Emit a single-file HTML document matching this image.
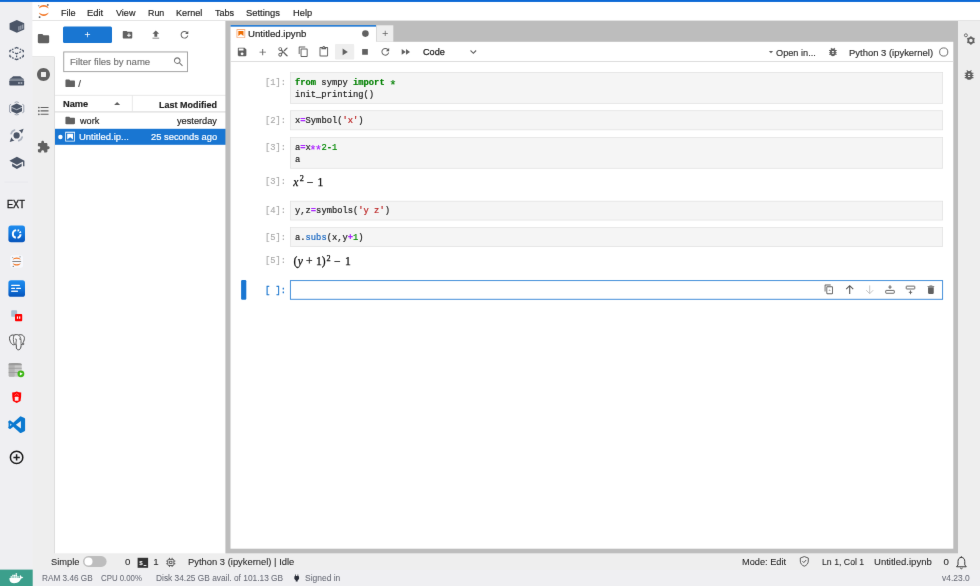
<!DOCTYPE html>
<html lang="en">
<head>
<meta charset="utf-8">
<title>JupyterLab</title>
<style>
*{box-sizing:border-box;margin:0;padding:0}
html,body{width:980px;height:586px;overflow:hidden;background:#fff}
body{font-family:"Liberation Sans",sans-serif;font-size:9.4px;color:#212121;position:relative}
#wrap{position:absolute;left:-8px;top:-8px;width:996px;height:602px;filter:url(#softblur)}
#in{position:absolute;left:8px;top:8px;width:980px;height:586px}
.t{position:absolute;white-space:nowrap;line-height:12px;height:12px;transform-origin:0 0;-webkit-text-stroke:0.18px}
.code,.pm{font-family:"Liberation Mono",monospace;font-size:9.7px;line-height:12px;white-space:pre;position:absolute;color:#212121;transform:scaleX(0.907);transform-origin:0 0}
.pm{color:#ababab;-webkit-text-stroke:0.15px #ababab}
.code{-webkit-text-stroke:0.2px}
.kw{color:#008000;font-weight:bold}.op{color:#aa22ff;font-weight:bold}.nu{color:#008800}.s{color:#ba2121}.pr{color:#1565c0}
.ast{display:inline-block;font-weight:normal;-webkit-text-stroke:0.1px;transform:translateY(3.3px) scale(1.4)}
.math{-webkit-text-stroke:0.25px #111;position:absolute;font-family:"Liberation Serif",serif;white-space:nowrap;color:#111;line-height:14px}
.math span{position:absolute;line-height:14px}
#bg{position:absolute;left:0;top:0}
</style>
</head>
<body>
<svg width="0" height="0" style="position:absolute"><defs><filter id="softblur" x="0" y="0" width="100%" height="100%" color-interpolation-filters="sRGB"><feConvolveMatrix order="3" kernelMatrix="0.00276 0.04704 0.00276 0.04704 0.80077 0.04704 0.00276 0.04704 0.00276" edgeMode="duplicate" preserveAlpha="true"/></filter></defs></svg>
<div id="wrap"><div id="in">
<svg id="bg" width="980" height="586" viewBox="0 0 980 586" style="overflow:visible">
<rect x="-8" y="-8" width="996" height="602" fill="#ffffff" />
<rect x="55" y="94.9" width="173" height="0.7" fill="#e0e0e0" />
<rect x="55" y="111.3" width="173" height="1.2" fill="#dcdcdc" />
<rect x="131.9" y="95.6" width="0.7" height="15.7" fill="#e0e0e0" />
<rect x="55" y="128.8" width="173" height="16.0" fill="#1976d2" />
<rect x="63" y="26.6" width="49" height="16.4" fill="#1976d2" rx="1.5"/>
<rect x="63.75" y="51.95" width="123.7" height="19.7" fill="#fff" stroke="#9a9a9a" stroke-width="0.9"/>
<rect x="225.4" y="15" width="744.6" height="545" fill="#bdbdbd" />
<rect x="958" y="15" width="30" height="545" fill="#eeeeee" />
<rect x="30" y="15" width="25" height="545" fill="#eeeeee" />
<rect x="54.2" y="56.6" width="0.8" height="503.4" fill="#dadada" />
<rect x="30" y="15" width="25" height="41.6" fill="#ffffff" />
<rect x="30" y="56.3" width="24.2" height="0.7" fill="#e0e0e0" />
<rect x="30" y="-8" width="958" height="29" fill="#dedede" />
<rect x="30" y="-8" width="958" height="28.2" fill="#ffffff" />
<rect x="30" y="553.3" width="958" height="21.7" fill="#eeeeee" />
<rect x="-8" y="570" width="996" height="24" fill="#efeff2" />
<rect x="-8" y="-8" width="40.4" height="578" fill="#efeff2" />
<rect x="-8" y="-8" width="996" height="9.95" fill="#0c69d6" />
<rect x="-8" y="569.6" width="40.7" height="24.4" fill="#3c9f8c" />
<rect x="83" y="556.1" width="23.6" height="10.8" rx="5.4" fill="#bdbdbd"/><circle cx="88.5" cy="561.5" r="4" fill="#fff"/>
<rect x="230.5" y="25" width="145.8" height="17" fill="#ffffff" />
<rect x="230.5" y="25" width="145.8" height="1.7" fill="#2a7fd6" />
<rect x="376.3" y="25.3" width="17.0" height="16.4" fill="#eeeeee" />
<rect x="376.3" y="25.3" width="0.7" height="16.4" fill="#d4d4d4" />
<rect x="230.5" y="41.8" width="722.8" height="506.9" fill="#ffffff" />
<rect x="230.5" y="61.1" width="722.8" height="0.8" fill="#d6d6d6" />
<rect x="335" y="44" width="19.2" height="15.6" fill="#eeeeee" rx="1"/>
<rect x="290.35" y="72.35" width="652.3" height="31.0" fill="#f5f5f5" stroke="#e0e0e0" stroke-width="0.7"/>
<rect x="290.35" y="110.75" width="652.3" height="19.1" fill="#f5f5f5" stroke="#e0e0e0" stroke-width="0.7"/>
<rect x="290.35" y="137.54999999999998" width="652.3" height="30.7" fill="#f5f5f5" stroke="#e0e0e0" stroke-width="0.7"/>
<rect x="290.35" y="201.15" width="652.3" height="18.9" fill="#f5f5f5" stroke="#e0e0e0" stroke-width="0.7"/>
<rect x="290.35" y="227.54999999999998" width="652.3" height="19.0" fill="#f5f5f5" stroke="#e0e0e0" stroke-width="0.7"/>
<rect x="290.35" y="280.65000000000003" width="652.3" height="18.6" fill="#fff" stroke="#1976d2" stroke-width="0.8"/>
<rect x="241.1" y="280.1" width="5.2" height="19.7" fill="#1976d2" rx="1.2"/>

<g transform="translate(37.5,3.5) scale(1.00000,1.00000) translate(-0.0,-0.0)"><path d="M1.3 4.9 C2.8 0.5 9.7 0.5 11.2 4.9 C8.4 2.6 4.1 2.6 1.3 4.9Z" fill="#f37726"/><path d="M1.3 9.0 C2.8 13.6 9.7 13.6 11.2 9.0 C8.4 11.4 4.1 11.4 1.3 9.0Z" fill="#f37726"/><circle cx="10.3" cy="1.4" r="0.95" fill="#616161"/><circle cx="1.2" cy="2.3" r="0.75" fill="#9e9e9e"/><circle cx="2.1" cy="13.6" r="0.95" fill="#4e4e4e"/></g>
<g transform="translate(36.7,31.8) scale(0.56667,0.56667) translate(-0.0,-0.0)"><path d="M10 4H4c-1.1 0-1.99.9-1.99 2L2 18c0 1.1.9 2 2 2h16c1.1 0 2-.9 2-2V8c0-1.1-.9-2-2-2h-8l-2-2z" fill="#616161" /></g>
<g transform="translate(36.8,67.8) scale(0.02617,0.02617) translate(-0.0,-0.0)"><path d="M256 8C119 8 8 119 8 256s111 248 248 248 248-111 248-248S393 8 256 8zm96 328c0 8.8-7.2 16-16 16H176c-8.8 0-16-7.2-16-16V176c0-8.8 7.2-16 16-16h160c8.8 0 16 7.2 16 16v160z" fill="#616161" /></g>
<g transform="translate(36.6,104.1) scale(0.56667,0.56667) translate(-0.0,-0.0)"><path d="M7,5H21V7H7V5M7,13V11H21V13H7M4,4.5A1.5,1.5 0 0,1 5.5,6A1.5,1.5 0 0,1 4,7.5A1.5,1.5 0 0,1 2.5,6A1.5,1.5 0 0,1 4,4.5M4,10.5A1.5,1.5 0 0,1 5.5,12A1.5,1.5 0 0,1 4,13.5A1.5,1.5 0 0,1 2.5,12A1.5,1.5 0 0,1 4,10.5M7,19V17H21V19H7M4,16.5A1.5,1.5 0 0,1 5.5,18A1.5,1.5 0 0,1 4,19.5A1.5,1.5 0 0,1 2.5,18A1.5,1.5 0 0,1 4,16.5Z" fill="#616161" /></g>
<g transform="translate(36.8,140.2) scale(0.55833,0.55833) translate(-0.0,-0.0)"><path d="M20.5 11H19V7c0-1.1-.9-2-2-2h-4V3.5C13 2.12 11.88 1 10.5 1S8 2.12 8 3.5V5H4c-1.1 0-1.99.9-1.99 2v3.8H3.5c1.49 0 2.7 1.21 2.7 2.7s-1.21 2.7-2.7 2.7H2V20c0 1.1.9 2 2 2h3.8v-1.5c0-1.49 1.21-2.7 2.7-2.7 1.49 0 2.7 1.21 2.7 2.7V22H17c1.1 0 2-.9 2-2v-4h1.5c1.38 0 2.5-1.12 2.5-2.5S21.88 11 20.5 11z" fill="#616161" /></g>
<g transform="translate(83,30.2) scale(0.37500,0.37500) translate(-0.0,-0.0)"><path d="M19 13h-6v6h-2v-6H5v-2h6V5h2v6h6v2z" fill="#fff" /></g>
<g transform="translate(121.8,29.0) scale(0.47500,0.47500) translate(-0.0,-0.0)"><path d="M20 6h-8l-2-2H4c-1.11 0-1.99.89-1.99 2L2 18c0 1.11.89 2 2 2h16c1.11 0 2-.89 2-2V8c0-1.11-.89-2-2-2zm-1 8h-3v3h-2v-3h-3v-2h3V9h2v3h3v2z" fill="#616161" /></g>
<g transform="translate(150.1,29.1) scale(0.47500,0.47500) translate(-0.0,-0.0)"><path d="M9 16h6v-6h4l-7-7-7 7h4zm-4 2h14v2H5z" fill="#616161" /></g>
<g transform="translate(178.7,29.0) scale(0.63889,0.63889) translate(-0.0,-0.0)"><path d="M9 13.5c-2.49 0-4.5-2.01-4.5-4.5S6.51 4.5 9 4.5c1.24 0 2.36.52 3.17 1.33L10 8h5V3l-1.76 1.76C12.15 3.68 10.66 3 9 3 5.69 3 3.01 5.69 3.01 9S5.69 15 9 15c2.97 0 5.43-2.16 5.9-5h-1.52c-.46 2-2.24 3.5-4.38 3.5z" fill="#616161" /></g>
<g transform="translate(172.8,56.2) scale(0.62222,0.62222) translate(-0.0,-0.0)"><path d="M12.1,10.9h-0.7l-0.2-0.2c0.8-0.9,1.3-2.2,1.3-3.5c0-3-2.4-5.4-5.4-5.4S1.8,4.2,1.8,7.1s2.4,5.4,5.4,5.4 c1.3,0,2.5-0.5,3.5-1.3l0.2,0.2v0.7l4.1,4.1l1.2-1.2L12.1,10.9z M7.1,10.9c-2.1,0-3.7-1.7-3.7-3.7s1.7-3.7,3.7-3.7s3.7,1.7,3.7,3.7 S9.2,10.9,7.1,10.9z" fill="#757575" /></g>
<g transform="translate(64.5,77.6) scale(0.47500,0.47500) translate(-0.0,-0.0)"><path d="M10 4H4c-1.1 0-1.99.9-1.99 2L2 18c0 1.1.9 2 2 2h16c1.1 0 2-.9 2-2V8c0-1.1-.9-2-2-2h-8l-2-2z" fill="#616161" /></g>
<path d="M114.1 105.1 L117.1 101.9 L120.1 105.1Z" fill="#616161"/>
<g transform="translate(64.5,114.8) scale(0.47500,0.47500) translate(-0.0,-0.0)"><path d="M10 4H4c-1.1 0-1.99.9-1.99 2L2 18c0 1.1.9 2 2 2h16c1.1 0 2-.9 2-2V8c0-1.1-.9-2-2-2h-8l-2-2z" fill="#616161" /></g>
<g transform="translate(64.3,130.9) scale(0.52727,0.52727) translate(-0.0,-0.0)"><path d="M18.7 3.3v15.4H3.3V3.3h15.4m1.5-1.5H1.8v18.3h18.3l.1-18.3z" fill="#fff" /><path d="M16.5 16.5l-5.4-4.3-5.6 4.3v-11h11z" fill="#fff" /></g>
<circle cx="60.4" cy="137" r="2.2" fill="#fff"/>
<g transform="translate(235.75,28.4) scale(0.46818,0.46818) translate(-0.0,-0.0)"><path d="M18.7 3.3v15.4H3.3V3.3h15.4m1.5-1.5H1.8v18.3h18.3l.1-18.3z" fill="#f2965a" /><path d="M16.5 16.5l-5.4-4.3-5.6 4.3v-11h11z" fill="#ef6c00" /></g>
<circle cx="365.4" cy="33.6" r="3.3" fill="#616161"/>
<g transform="translate(380.7,28.75) scale(0.37500,0.37500) translate(-0.0,-0.0)"><path d="M19 13h-6v6h-2v-6H5v-2h6V5h2v6h6v2z" fill="#616161" /></g>
<g transform="translate(236.4,46.2) scale(0.47500,0.47500) translate(-0.0,-0.0)"><path d="M17 3H5c-1.11 0-2 .9-2 2v14c0 1.1.89 2 2 2h14c1.1 0 2-.9 2-2V7l-4-4zm-5 16c-1.66 0-3-1.34-3-3s1.34-3 3-3 3 1.34 3 3-1.34 3-3 3zm3-10H5V5h10v4z" fill="#616161" /></g>
<g transform="translate(257.2,46.6) scale(0.45833,0.45833) translate(-0.0,-0.0)"><path d="M19 13h-6v6h-2v-6H5v-2h6V5h2v6h6v2z" fill="#616161" /></g>
<g transform="translate(277.4,46.2) scale(0.47500,0.47500) translate(-0.0,-0.0)"><path d="M9.64 7.64c.23-.5.36-1.05.36-1.64 0-2.21-1.79-4-4-4S2 3.79 2 6s1.79 4 4 4c.59 0 1.14-.13 1.64-.36L10 12l-2.36 2.36C7.14 14.13 6.59 14 6 14c-2.21 0-4 1.79-4 4s1.79 4 4 4 4-1.79 4-4c0-.59-.13-1.14-.36-1.64L12 14l7 7h3v-1L9.64 7.64zM6 8c-1.1 0-2-.89-2-2s.9-2 2-2 2 .89 2 2-.9 2-2 2zm0 12c-1.1 0-2-.89-2-2s.9-2 2-2 2 .89 2 2-.9 2-2 2zm6-7.5c-.28 0-.5-.22-.5-.5s.22-.5.5-.5.5.22.5.5-.22.5-.5.5zM19 3l-6 6 2 2 7-7V3z" fill="#616161" /></g>
<g transform="translate(297.6,45.9) scale(0.64444,0.64444) translate(-0.0,-0.0)"><path d="M11.9,1H3.2C2.4,1,1.7,1.7,1.7,2.5v10.2h1.5V2.5h8.7V1z M14.1,3.9h-8c-0.8,0-1.5,0.7-1.5,1.5v10.2c0,0.8,0.7,1.5,1.5,1.5h8 c0.8,0,1.5-0.7,1.5-1.5V5.4C15.5,4.6,14.9,3.9,14.1,3.9z M14.1,15.5h-8V5.4h8V15.5z" fill="#616161" /></g>
<g transform="translate(318.1,46.0) scale(0.47500,0.47500) translate(-0.0,-0.0)"><path d="M19 2h-4.18C14.4.84 13.3 0 12 0c-1.3 0-2.4.84-2.82 2H5c-1.1 0-2 .9-2 2v16c0 1.1.9 2 2 2h14c1.1 0 2-.9 2-2V4c0-1.1-.9-2-2-2zm-7 0c.55 0 1 .45 1 1s-.45 1-1 1-1-.45-1-1 .45-1 1-1zm7 18H5V4h2v3h10V4h2v16z" fill="#616161" /></g>
<g transform="translate(338.8,46.2) scale(0.47500,0.47500) translate(-0.0,-0.0)"><path d="M8 5v14l11-7z" fill="#616161" /></g>
<g transform="translate(359.3,46.2) scale(0.47500,0.47500) translate(-0.0,-0.0)"><path d="M6 6h12v12H6z" fill="#616161" /></g>
<g transform="translate(379.5,46.0) scale(0.64444,0.64444) translate(-0.0,-0.0)"><path d="M9 13.5c-2.49 0-4.5-2.01-4.5-4.5S6.51 4.5 9 4.5c1.24 0 2.36.52 3.17 1.33L10 8h5V3l-1.76 1.76C12.15 3.68 10.66 3 9 3 5.69 3 3.01 5.69 3.01 9S5.69 15 9 15c2.97 0 5.43-2.16 5.9-5h-1.52c-.46 2-2.24 3.5-4.38 3.5z" fill="#616161" /></g>
<g transform="translate(399.8,46.2) scale(0.47500,0.47500) translate(-0.0,-0.0)"><path d="M4 18l8.5-6L4 6v12zm9-12v12l8.5-6L13 6z" fill="#616161" /></g>
<g transform="translate(467.5,46.3) scale(0.64444,0.64444) translate(-0.0,-0.0)"><path d="M5.2,5.9L9,9.7l3.8-3.8l1.2,1.2l-4.9,5l-4.9-5L5.2,5.9z" fill="#616161" /></g>
<g transform="translate(767.5,48.7) scale(0.38889,0.38889) translate(-0.0,-0.0)"><path d="M3.5 6 L14.5 6 L9 12Z" fill="#616161"/></g>
<g transform="translate(827.2,46.2) scale(0.47500,0.47500) translate(-0.0,-0.0)"><path d="M20 8h-2.81c-.45-.78-1.07-1.45-1.82-1.96L17 4.41 15.59 3l-2.17 2.17C12.96 5.06 12.49 5 12 5c-.49 0-.96.06-1.41.17L8.41 3 7 4.41l1.62 1.63C7.88 6.55 7.26 7.22 6.81 8H4v2h2.09c-.05.33-.09.66-.09 1v1H4v2h2v1c0 .34.04.67.09 1H4v2h2.81c1.04 1.79 2.97 3 5.19 3s4.15-1.21 5.19-3H20v-2h-2.09c.05-.33.09-.66.09-1v-1h2v-2h-2v-1c0-.34-.04-.67-.09-1H20V8zm-6 8h-4v-2h4v2zm0-4h-4v-2h4v2z" fill="#616161" /></g>
<circle cx="943.7" cy="52" r="4.1" fill="none" stroke="#616161" stroke-width="0.9"/>
<g transform="translate(963,32.5) scale(1.00000,1.00000) translate(-0.0,-0.0)"><circle cx="2.9" cy="2.8" r="1.5" fill="none" stroke="#616161" stroke-width="0.9"/><g transform="translate(7.9,8)"><circle r="2.6" fill="none" stroke="#616161" stroke-width="1.7"/><rect x="-0.75" y="-4.2" width="1.5" height="1.6" fill="#616161" transform="rotate(0)"/><rect x="-0.75" y="-4.2" width="1.5" height="1.6" fill="#616161" transform="rotate(60)"/><rect x="-0.75" y="-4.2" width="1.5" height="1.6" fill="#616161" transform="rotate(120)"/><rect x="-0.75" y="-4.2" width="1.5" height="1.6" fill="#616161" transform="rotate(180)"/><rect x="-0.75" y="-4.2" width="1.5" height="1.6" fill="#616161" transform="rotate(240)"/><rect x="-0.75" y="-4.2" width="1.5" height="1.6" fill="#616161" transform="rotate(300)"/></g></g>
<g transform="translate(962.6,68.4) scale(0.54167,0.54167) translate(-0.0,-0.0)"><path d="M20 8h-2.81c-.45-.78-1.07-1.45-1.82-1.96L17 4.41 15.59 3l-2.17 2.17C12.96 5.06 12.49 5 12 5c-.49 0-.96.06-1.41.17L8.41 3 7 4.41l1.62 1.63C7.88 6.55 7.26 7.22 6.81 8H4v2h2.09c-.05.33-.09.66-.09 1v1H4v2h2v1c0 .34.04.67.09 1H4v2h2.81c1.04 1.79 2.97 3 5.19 3s4.15-1.21 5.19-3H20v-2h-2.09c.05-.33.09-.66.09-1v-1h2v-2h-2v-1c0-.34-.04-.67-.09-1H20V8zm-6 8h-4v-2h4v2zm0-4h-4v-2h4v2z" fill="#616161" /></g>
<g transform="translate(823.6,284.0) scale(0.60000,0.60000) translate(-0.0,-0.0)"><path d="M11.9,1H3.2C2.4,1,1.7,1.7,1.7,2.5v10.2h1.5V2.5h8.7V1z M14.1,3.9h-8c-0.8,0-1.5,0.7-1.5,1.5v10.2c0,0.8,0.7,1.5,1.5,1.5h8 c0.8,0,1.5-0.7,1.5-1.5V5.4C15.5,4.6,14.9,3.9,14.1,3.9z M14.1,15.5h-8V5.4h8V15.5z" fill="#616161" /><path d="M9.3 9.6h1.4v1.4h-1.4zM8.6 10h2.8v0.7H8.6z" fill="#616161"/></g>
<g transform="translate(844,284) scale(0.47500,0.47500) translate(-0.0,-0.0)"><path d="M12 3.6 L12 21 M4.6 11 L12 3.6 L19.4 11" fill="none" stroke="#555" stroke-width="2.3"/></g>
<g transform="translate(864,284) scale(0.47500,0.47500) translate(-0.0,-0.0)"><path d="M12 3 L12 20.4 M4.6 13 L12 20.4 L19.4 13" fill="none" stroke="#c2c2c2" stroke-width="2"/></g>
<g transform="translate(884.3,284) scale(0.47500,0.47500) translate(-0.0,-0.0)"><path d="M12 2.5 v8 M8.5 6.5 h7" fill="none" stroke="#616161" stroke-width="2"/><rect x="3" y="13.5" width="18" height="6" rx="1" fill="none" stroke="#616161" stroke-width="2"/></g>
<g transform="translate(904.8,284) scale(0.47500,0.47500) translate(-0.0,-0.0)"><path d="M12 13.5 v8 M8.5 17.5 h7" fill="none" stroke="#616161" stroke-width="2"/><rect x="3" y="4.5" width="18" height="6" rx="1" fill="none" stroke="#616161" stroke-width="2"/></g>
<g transform="translate(925.2,284) scale(0.47500,0.47500) translate(-0.0,-0.0)"><path d="M6 19c0 1.1.9 2 2 2h8c1.1 0 2-.9 2-2V7H6v12zM19 4h-3.5l-1-1h-5l-1 1H5v2h14V4z" fill="#616161" /></g>
<g transform="translate(137.6,557.8) scale(1.00000,1.00000) translate(-0.0,-0.0)"><rect width="10.5" height="10" fill="#333"/><text x="1.6" y="7.6" font-family="Liberation Sans, sans-serif" font-size="6.2" font-weight="bold" fill="#fff">$</text><rect x="6" y="7.2" width="2.8" height="0.9" fill="#fff"/></g>
<g transform="translate(165.6,557.2) scale(0.43333,0.43333) translate(-0.0,-0.0)"><rect x="5" y="5" width="14" height="14" rx="2" fill="none" stroke="#424242" stroke-width="2"/><rect x="9.3" y="9.3" width="5.4" height="5.4" fill="none" stroke="#424242" stroke-width="1.8"/><path d="M9 1.5v3M15 1.5v3M9 19.5v3M15 19.5v3M1.5 9h3M1.5 15h3M19.5 9h3M19.5 15h3" stroke="#424242" stroke-width="2" fill="none"/></g>
<g transform="translate(798.3,555.3) scale(0.50000,0.50000) translate(-0.0,-0.0)"><path d="M12 2.5 L20 5.5 V11.5 C20 16.3 16.7 20.3 12 21.8 C7.300 20.3 4 16.3 4 11.500 V5.5 Z" fill="none" stroke="#424242" stroke-width="1.7"/><path d="M8.3 11.8 L11 14.5 L15.8 9.4" fill="none" stroke="#424242" stroke-width="1.8"/></g>
<g transform="translate(953.9,554.9) scale(0.62500,0.62500) translate(-0.0,-0.0)"><path d="M12 4 C8.300 4 6.600 7 6.600 10.500 V16 L4.200 19 H19.800 L17.400 16 V10.500 C17.400 7 15.700 4 12 4Z" fill="none" stroke="#3a3a3a" stroke-width="1.600" stroke-linejoin="round"/><path d="M10.100 21 Q12 23.400 13.900 21" fill="none" stroke="#3a3a3a" stroke-width="1.600"/><circle cx="12" cy="3.300" r="1.100" fill="#333"/></g>
<g transform="translate(9.4,571.3) scale(0.57500,0.57500) translate(-0.0,-0.0)"><path d="M13.983 11.078h2.119a.186.186 0 00.186-.185V9.006a.186.186 0 00-.186-.186h-2.119a.185.185 0 00-.185.185v1.888c0 .102.083.185.185.185m-2.954-5.43h2.118a.186.186 0 00.186-.186V3.574a.186.186 0 00-.186-.185h-2.118a.185.185 0 00-.185.185v1.888c0 .102.082.185.185.185m0 2.716h2.118a.187.187 0 00.186-.186V6.29a.186.186 0 00-.186-.185h-2.118a.185.185 0 00-.185.185v1.887c0 .102.082.185.185.186m-2.93 0h2.12a.186.186 0 00.184-.186V6.29a.185.185 0 00-.185-.185H8.1a.185.185 0 00-.185.185v1.887c0 .102.083.185.185.186m-2.964 0h2.119a.186.186 0 00.185-.186V6.29a.185.185 0 00-.185-.185H5.136a.186.186 0 00-.186.185v1.887c0 .102.084.185.186.186m5.893 2.715h2.118a.186.186 0 00.186-.185V9.006a.186.186 0 00-.186-.186h-2.118a.185.185 0 00-.185.185v1.888c0 .102.082.185.185.185m-2.93 0h2.12a.185.185 0 00.184-.185V9.006a.185.185 0 00-.184-.186h-2.12a.185.185 0 00-.184.185v1.888c0 .102.083.185.185.185m-2.964 0h2.119a.185.185 0 00.185-.185V9.006a.185.185 0 00-.184-.186h-2.12a.186.186 0 00-.186.186v1.887c0 .102.084.185.186.185m-2.92 0h2.12a.185.185 0 00.184-.185V9.006a.185.185 0 00-.184-.186h-2.12a.185.185 0 00-.184.185v1.888c0 .102.082.185.185.185M23.763 9.89c-.065-.051-.672-.51-1.954-.51-.338.001-.676.03-1.01.087-.248-1.7-1.653-2.53-1.716-2.566l-.344-.199-.226.327c-.284.438-.49.922-.612 1.43-.23.97-.09 1.882.403 2.661-.595.332-1.55.413-1.744.42H.751a.751.751 0 00-.75.748 11.376 11.376 0 00.692 4.062c.545 1.428 1.355 2.48 2.41 3.124 1.18.723 3.1 1.137 5.275 1.137.983.003 1.963-.086 2.93-.266a12.248 12.248 0 003.823-1.389c.98-.567 1.86-1.288 2.61-2.136 1.252-1.418 1.998-2.997 2.553-4.4h.221c1.372 0 2.215-.549 2.68-1.009.309-.293.55-.65.707-1.046l.098-.288Z" fill="#fff" /></g>
<g transform="translate(292,573.2) scale(0.39167,0.39167) translate(-0.0,-0.0)"><path d="M16 7V3h-2v4h-4V3H8v4C7 7 6 8 6 9v5.5L9.5 18v3h5v-3l3.500-3.500V9c0-1-1-2-2-2z" fill="#2b2f3a"/></g>
<g transform="translate(9,19.6) scale(1.00000,1.00000) translate(-0.0,-0.0)"><path d="M7.8 0.4 L15.2 3.7 V9.8 L7.8 13.1 L0.6 9.800 V3.7 Z" fill="#4b5567"/><path d="M9.4 6.9 l1.100-0.500 v4.3 l-1.100 0.500z M11.3 6.050 l1.100-0.500 v4.3 l-1.100 0.500z M13.2 5.200 l1.100-0.500 v4.3 l-1.100 0.500z" fill="#a9b0bd"/></g>
<g transform="translate(9,46.9) scale(1.00000,1.00000) translate(-0.0,-0.0)"><path d="M5.700 1.500 L7.600 0.600 L9.500 1.500 M3.000 2.750 L4.400 2.100 M12.200 2.750 L10.800 2.100 M2.300 3.100 L0.900 3.750 V5.400 M12.900 3.100 L14.300 3.750 V5.400 M0.900 7.800 V9.600 L2.300 10.300 M14.300 7.800 V9.600 L12.900 10.300 M3.200 10.700 L4.600 11.400 M12.000 10.700 L10.600 11.400 M5.700 11.900 L7.600 12.800 L9.500 11.900" fill="none" stroke="#4b5567" stroke-width="1.300" stroke-linejoin="round"/><path d="M3.200 4.800 L5.000 5.600 M12.000 4.800 L10.200 5.600 M6.000 6.100 L7.600 6.900 L9.200 6.100 M7.600 6.900 V7.400 M7.600 8.700 V10.300" fill="none" stroke="#4b5567" stroke-width="1.200"/></g>
<g transform="translate(9,76) scale(1.00000,1.00000) translate(-0.0,-0.0)"><path d="M4.2 0.300 H11.2 L15 3.4 H0.4 Z" fill="#4b5567"/><path d="M1.2 2.6 H14.2 L15.100 4.4 H0.300Z" fill="#7d8593"/><rect x="0.300" y="4.400" width="14.8" height="5.2" rx="0.8" fill="#4b5567"/><rect x="9.100" y="6.100" width="1.700" height="1.800" fill="#a9b0bd"/><rect x="11.600" y="6.100" width="1.700" height="1.800" fill="#a9b0bd"/></g>
<g transform="translate(9,101.4) scale(1.00000,1.00000) translate(-0.0,-0.0)"><path d="M7.700 2.100 L13.000 4.500 V9.900 L7.700 12.400 L2.400 9.900 V4.500Z" fill="#4b5567"/><path d="M2.400 5.900 L7.700 8.300 L13.000 5.900" fill="none" stroke="#c5cad2" stroke-width="0.900"/><path d="M2.100 2.900 L0.600 3.700 V10.600 L2.100 11.400 M13.300 2.900 L14.800 3.700 V10.600 L13.300 11.400 M5.600 1.200 L7.700 0.400 L9.800 1.200 M5.600 13.000 L7.700 13.500 L9.800 13.000" fill="none" stroke="#9aa1af" stroke-width="1.000"/></g>
<g transform="translate(9.3,128) scale(1.00000,1.00000) translate(-0.0,-0.0)"><circle cx="7.3" cy="7.400" r="3.100" fill="#4b5567"/><path d="M9.400 2.400 L14.300 0.700 L12.600 5.600 C12.000 4.100 10.900 3.000 9.400 2.400Z" fill="#4b5567"/><path d="M5.300 12.400 L0.400 14.100 L2.100 9.200 C2.700 10.700 3.800 11.800 5.300 12.400Z" fill="#4b5567"/><path d="M1.900 5.600 C2.300 3.900 3.500 2.600 5.200 2.100" fill="none" stroke="#a9b0bd" stroke-width="1.800" stroke-linecap="round"/><path d="M12.800 9.200 C12.400 10.900 11.200 12.200 9.500 12.700" fill="none" stroke="#a9b0bd" stroke-width="1.800" stroke-linecap="round"/></g>
<g transform="translate(8.7,154.6) scale(0.68333,0.68333) translate(-0.0,-0.0)"><path d="M5 13.18v4L12 21l7-3.82v-4L12 17l-7-3.82zM12 3L1 9l11 6 9-4.91V17h2V9L12 3z" fill="#4b5567" /></g>
<rect x="4.5" y="181.7" width="23.5" height="0.7" fill="#e5e5ea"/>
<g transform="translate(8.4,225.6)"><defs><linearGradient id="g1" x1="0" y1="0" x2="0" y2="1"><stop offset="0" stop-color="#1f8cee"/><stop offset="0.45" stop-color="#1279e0"/><stop offset="1" stop-color="#0653ba"/></linearGradient></defs><rect width="16.6" height="16.6" rx="2.6" fill="url(#g1)"/><path d="M7.42 12.20 A3.9 3.9 0 0 1 7.76 4.54 M9.18 4.60 A3.9 3.9 0 0 1 10.59 5.24 M11.37 6.00 A3.9 3.9 0 0 1 12.08 7.46 M12.19 8.60 A3.9 3.9 0 0 1 9.11 12.21" fill="none" stroke="#fff" stroke-width="1.9"/></g>
<g transform="translate(10.4,255.2) scale(0.92647,0.92647) translate(-0.0,-0.0)"><rect width="13.6" height="13.6" rx="2.400" fill="#f6f8fd"/><path d="M2.500 5.000 C3.800 1.500 9.800 1.500 11.100 5.000 C8.800 3.500 4.800 3.500 2.500 5.000Z" fill="#f37726"/><path d="M2.500 8.600 C3.800 12.100 9.800 12.100 11.100 8.600 C8.800 10.100 4.800 10.100 2.500 8.600Z" fill="#f37726"/><rect x="1.900" y="6.250" width="9.800" height="1.100" rx="0.500" fill="#6e6e6e" opacity="0.850"/><circle cx="10.400" cy="1.800" r="0.700" fill="#777"/><circle cx="2.500" cy="2.500" r="0.550" fill="#888"/><circle cx="3.100" cy="12.100" r="0.700" fill="#777"/></g>
<g transform="translate(8.4,280.2)"><defs><linearGradient id="g2" x1="0" y1="0" x2="0" y2="1"><stop offset="0" stop-color="#1f8cee"/><stop offset="0.45" stop-color="#1279e0"/><stop offset="1" stop-color="#0653ba"/></linearGradient></defs><rect width="16.6" height="16.6" rx="2.600" fill="url(#g2)"/><rect x="2.700" y="4.500" width="8.800" height="1.300" rx="0.500" fill="#fff"/><rect x="2.700" y="7.500" width="4.000" height="1.300" rx="0.500" fill="#fff"/><rect x="7.700" y="7.500" width="4.900" height="1.300" rx="0.500" fill="#fff"/><rect x="2.700" y="10.200" width="6.900" height="1.500" rx="0.500" fill="#e4eefc"/></g>
<g transform="translate(11,310) scale(1.00000,1.00000) translate(-0.0,-0.0)"><rect x="0.200" y="0.200" width="5.900" height="6.600" rx="0.900" fill="#a9bfd0"/><rect x="4.000" y="4.000" width="7.200" height="7.200" rx="0.900" fill="#ff0000"/><rect x="5.900" y="6.400" width="1.200" height="2.400" fill="#fff"/><rect x="8.100" y="6.400" width="1.200" height="2.400" fill="#fff"/></g>
<g transform="translate(8.8,334) scale(1.00000,1.00000) translate(-0.0,-0.0)"><path d="M5.600 10.600 C3.300 11.400 1.300 8.600 0.700 4.700 C0.300 1.900 2.700 0.400 5.200 1.200 C6.300 0.500 8.600 0.400 9.900 1.000 C12.800 0.000 15.800 1.700 15.600 4.500 C15.500 6.300 14.600 8.300 13.700 9.500 C14.400 9.700 15.100 9.600 15.300 9.900 C14.600 10.800 12.900 10.800 12.300 10.200 C12.300 12.000 12.300 14.200 11.000 15.300 C9.400 16.500 7.800 15.500 7.600 13.900 C7.500 12.600 7.600 11.400 7.400 10.500 C6.800 10.100 6.200 10.200 5.600 10.600Z" fill="#f5f5f7" stroke="#4a4a4a" stroke-width="1.000"/><path d="M5.200 1.300 C4.300 3.600 4.300 7.000 5.500 10.300 M9.900 1.100 C11.600 2.600 12.700 5.400 12.200 9.800 M6.300 5.400 C6.900 4.700 7.800 5.000 7.600 6.200 C7.500 7.600 6.800 8.800 7.500 10.300 M10.300 4.900 C11.200 4.500 11.800 5.300 11.300 6.000" fill="none" stroke="#555" stroke-width="0.900"/></g>
<g transform="translate(8,362.4) scale(1.00000,1.00000) translate(-0.0,-0.0)"><rect x="0.700" y="0.700" width="13.000" height="13.700" rx="1.600" fill="#c9c9c9"/><rect x="0.700" y="0.700" width="6.000" height="13.700" rx="1.000" fill="#b3b3b3"/><path d="M0.700 1.700 C3.000 0.300 11.400 0.300 13.700 1.700 V2.800 H0.700Z" fill="#9a9a9a"/><rect x="0.700" y="5.400" width="13.000" height="0.900" fill="#9d9d9d"/><rect x="0.700" y="9.600" width="13.000" height="0.900" fill="#9d9d9d"/><circle cx="12.900" cy="11.400" r="3.400" fill="#3fb618"/><path d="M11.900 9.800 L14.800 11.400 L11.900 13.000Z" fill="#fff"/></g>
<g transform="translate(11.8,391.4) scale(1.00000,1.00000) translate(-0.0,-0.0)"><path d="M4.900 0.200 C6.300 0.900 7.900 1.200 9.400 1.200 C9.500 4.000 9.300 7.000 8.700 9.700 L4.900 11.700 L1.100 9.700 C0.500 7.000 0.300 4.000 0.400 1.200 C1.900 1.200 3.500 0.900 4.900 0.200Z" fill="#ff0000"/><rect x="3.000" y="5.300" width="3.700" height="4.000" rx="0.500" fill="#fff" opacity="0.920"/><path d="M2.700 4.000 L4.900 2.200 L7.100 4.000" stroke="#ff8080" stroke-width="0.800" fill="none"/></g>
<g transform="translate(8.3,416.3) scale(0.70000,0.70000) translate(-0.0,-0.0)"><path d="M23.15 2.587L18.21.21a1.494 1.494 0 0 0-1.705.29l-9.46 8.63-4.12-3.128a.999.999 0 0 0-1.276.057L.327 7.261A1 1 0 0 0 .326 8.74L3.899 12 .326 15.26a1 1 0 0 0 .001 1.479L1.65 17.94a.999.999 0 0 0 1.276.057l4.12-3.128 9.46 8.63a1.492 1.492 0 0 0 1.704.29l4.942-2.377A1.5 1.5 0 0 0 24 20.06V3.939a1.5 1.5 0 0 0-.85-1.352zm-5.146 14.861L10.826 12l7.178-5.448v10.896z" fill="#0b79d0" /><path d="M1.2 7.6 L6.8 12 L1.2 16.4Z" fill="#0b79d0" stroke="#0b79d0" stroke-width="1.6" stroke-linejoin="round"/><path d="M2.7 10.3 L4.9 12 L2.7 13.7Z" fill="#dfe9f5"/></g>
<g transform="translate(9,450) scale(1.00000,1.00000) translate(-0.0,-0.0)"><circle cx="7.600" cy="7.400" r="6.200" fill="none" stroke="#1a1a1a" stroke-width="1.500"/><path d="M7.600 4.200 V10.600 M4.400 7.400 H10.800" stroke="#1a1a1a" stroke-width="1.500" fill="none"/></g>

</svg>
<div class="t" style="left:60.70px;top:7px;font-size:9.7px;color:#1f1f1f;transform:scaleX(0.9404)">File</div>
<div class="t" style="left:87.48px;top:7px;font-size:9.7px;color:#1f1f1f;transform:scaleX(0.9711)">Edit</div>
<div class="t" style="left:116.26px;top:7px;font-size:9.7px;color:#1f1f1f;transform:scaleX(0.9318)">View</div>
<div class="t" style="left:147.55px;top:7px;font-size:9.7px;color:#1f1f1f;transform:scaleX(0.9120)">Run</div>
<div class="t" style="left:176.03px;top:7px;font-size:9.7px;color:#1f1f1f;transform:scaleX(0.9395)">Kernel</div>
<div class="t" style="left:214.77px;top:7px;font-size:9.7px;color:#1f1f1f;transform:scaleX(0.9351)">Tabs</div>
<div class="t" style="left:245.82px;top:7px;font-size:9.7px;color:#1f1f1f;transform:scaleX(0.9696)">Settings</div>
<div class="t" style="left:292.52px;top:7px;font-size:9.7px;color:#1f1f1f;transform:scaleX(0.9594)">Help</div>
<div class="t" style="left:70.02px;top:56px;font-size:9.7px;color:#757575;transform:scaleX(0.9864)">Filter files by name</div>
<div class="t" style="left:78.27px;top:78px;font-size:9.7px;color:#424242;transform:scaleX(1.0000)">/</div>
<div class="t" style="left:62.79px;top:98px;font-size:9.7px;color:#1f1f1f;transform:scaleX(0.9578);font-weight:bold">Name</div>
<div class="t" style="left:158.98px;top:99px;font-size:9.7px;color:#1f1f1f;transform:scaleX(0.9270);font-weight:bold">Last Modified</div>
<div class="t" style="left:79.68px;top:115px;font-size:9.7px;color:#1f1f1f;transform:scaleX(0.9406)">work</div>
<div class="t" style="left:176.62px;top:115px;font-size:9.7px;color:#1f1f1f;transform:scaleX(0.9515)">yesterday</div>
<div class="t" style="left:79.37px;top:131px;font-size:9.7px;color:#ffffff;transform:scaleX(0.9753)">Untitled.ip...</div>
<div class="t" style="left:151.07px;top:131px;font-size:9.7px;color:#ffffff;transform:scaleX(0.9661)">25 seconds ago</div>
<div class="t" style="left:247.93px;top:28px;font-size:9.7px;color:#1f1f1f;transform:scaleX(0.9945)">Untitled.ipynb</div>
<div class="t" style="left:423.27px;top:46px;font-size:9.7px;color:#1f1f1f;transform:scaleX(0.9419);-webkit-text-stroke:0.25px #1f1f1f">Code</div>
<div class="t" style="left:776.32px;top:47px;font-size:9.7px;color:#333;transform:scaleX(0.9475)">Open in...</div>
<div class="t" style="left:849.23px;top:47px;font-size:9.7px;color:#333;transform:scaleX(0.9753)">Python 3 (ipykernel)</div>
<div class="t" style="left:51.37px;top:556px;font-size:9.7px;color:#262626;transform:scaleX(0.9604);-webkit-text-stroke:0.07px #262626">Simple</div>
<div class="t" style="left:124.90px;top:556px;font-size:9.7px;color:#262626;transform:scaleX(1.0000);-webkit-text-stroke:0.07px #262626">0</div>
<div class="t" style="left:153.17px;top:556px;font-size:9.7px;color:#262626;transform:scaleX(1.0000);-webkit-text-stroke:0.07px #262626">1</div>
<div class="t" style="left:188.23px;top:556px;font-size:9.7px;color:#262626;transform:scaleX(0.9692);-webkit-text-stroke:0.07px #262626">Python 3 (ipykernel) | Idle</div>
<div class="t" style="left:742.13px;top:556px;font-size:9.7px;color:#262626;transform:scaleX(0.9517);-webkit-text-stroke:0.07px #262626">Mode: Edit</div>
<div class="t" style="left:822.07px;top:556px;font-size:9.7px;color:#262626;transform:scaleX(0.9006);-webkit-text-stroke:0.07px #262626">Ln 1, Col 1</div>
<div class="t" style="left:874.21px;top:556px;font-size:9.7px;color:#262626;transform:scaleX(0.9838);-webkit-text-stroke:0.07px #262626">Untitled.ipynb</div>
<div class="t" style="left:943.41px;top:556px;font-size:9.7px;color:#262626;transform:scaleX(1.0000);-webkit-text-stroke:0.07px #262626">0</div>
<div class="t" style="left:42.49px;top:572px;font-size:8.9px;color:#676a75;transform:scaleX(0.9254);-webkit-text-stroke:0.04px #676a75">RAM 3.46 GB</div>
<div class="t" style="left:101.49px;top:572px;font-size:8.9px;color:#676a75;transform:scaleX(0.8832);-webkit-text-stroke:0.04px #676a75">CPU 0.00%</div>
<div class="t" style="left:155.64px;top:572px;font-size:8.9px;color:#676a75;transform:scaleX(0.9408);-webkit-text-stroke:0.04px #676a75">Disk 34.25 GB avail. of 101.13 GB</div>
<div class="t" style="left:304.72px;top:572px;font-size:8.9px;color:#676a75;transform:scaleX(0.9540);-webkit-text-stroke:0.04px #676a75">Signed in</div>
<div class="t" style="left:941.93px;top:572px;font-size:8.9px;color:#676a75;transform:scaleX(0.9523);-webkit-text-stroke:0.04px #676a75">v4.23.0</div>
<div class="t" style="left:6.73px;top:199px;font-size:10px;color:#1c1c1e;transform:scaleX(0.9121);-webkit-text-stroke:0.4px #1c1c1e">EXT</div>

<div class="pm" style="left:265.2px;top:77px">[1]:</div>
<div class="code" style="left:294.9px;top:77px"><span class="kw">from</span> sympy <span class="kw">import</span> <span class="kw ast">*</span>
init_printing()</div>
<div class="pm" style="left:265.2px;top:115px">[2]:</div>
<div class="code" style="left:294.9px;top:115px">x<span class="op">=</span>Symbol(<span class="s">'x'</span>)</div>
<div class="pm" style="left:265.2px;top:142px">[3]:</div>
<div class="code" style="left:294.9px;top:142px">a<span class="op">=</span>x<span class="op ast">*</span><span class="op ast">*</span><span class="nu">2</span><span class="kw">-</span><span class="nu">1</span>
a</div>
<div class="pm" style="left:265.2px;top:176px">[3]:</div>
<div class="pm" style="left:265.2px;top:205px">[4]:</div>
<div class="code" style="left:294.9px;top:205px">y,z<span class="op">=</span>symbols(<span class="s">'y z'</span>)</div>
<div class="pm" style="left:265.2px;top:232px">[5]:</div>
<div class="code" style="left:294.9px;top:232px">a.<span class="pr">subs</span>(x,y<span class="op">+</span><span class="nu">1</span>)</div>
<div class="pm" style="left:265.2px;top:255px">[5]:</div>
<div class="pm" style="left:265.2px;top:285px;color:#1f78cf;-webkit-text-stroke:0.3px #1f78cf">[ ]:</div>
<div class="math" style="left:293.2px;top:175.6px;font-size:11.6px"><span style="left:0;font-style:italic">x</span><span style="left:6.6px;top:-3.4px;font-size:8.2px">2</span><span style="left:13.6px">−</span><span style="left:24.4px">1</span></div>
<div class="math" style="left:293.6px;top:255.4px;font-size:11.6px"><span style="left:0">(</span><span style="left:4.2px;font-style:italic">y</span><span style="left:12.4px">+</span><span style="left:22.4px">1</span><span style="left:28.2px">)</span><span style="left:33px;top:-3.6px;font-size:8.2px">2</span><span style="left:40.4px">−</span><span style="left:51.4px">1</span></div>

</div></div>
</body>
</html>
